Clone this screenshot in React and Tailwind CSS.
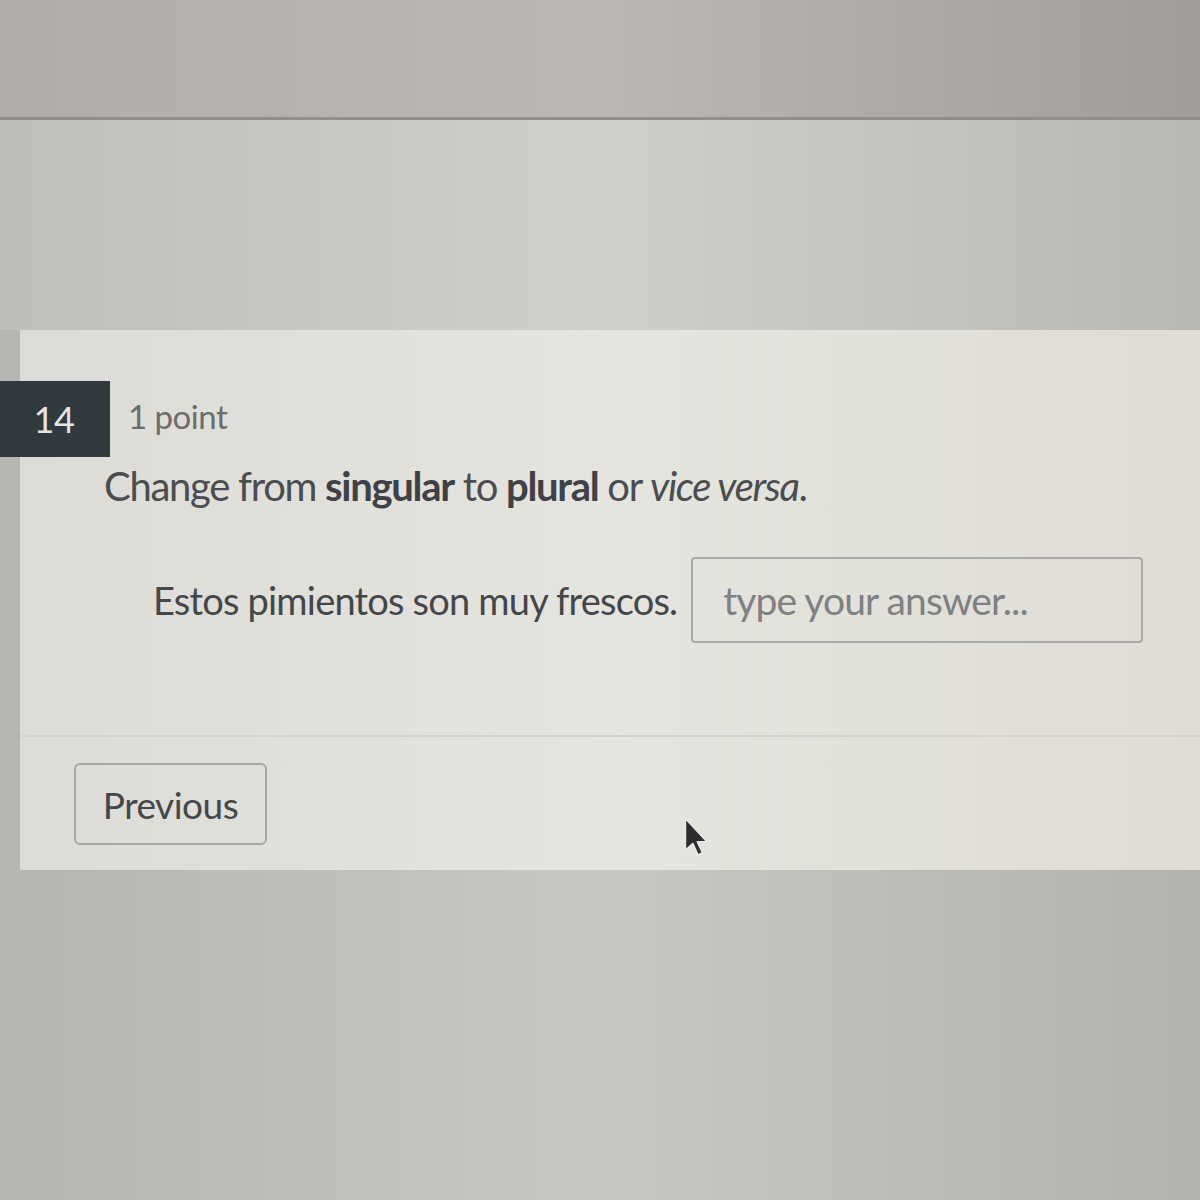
export default function App() {
  return (
    <div className="relative w-[1200px] h-[1200px] overflow-hidden flex flex-col font-['Lato','Noto_Sans',sans-serif] bg-linear-to-r from-[#b6b5b0] via-[#c8c7c2] to-[#b3b2ad]">
      <div className="h-[117px] bg-linear-to-r from-[#b0adaa] via-[#bab7b5] to-[#a09d9a]" />
      <div className="h-[3px] bg-[#8e8e8c]" />
      <div className="h-[210px] bg-linear-to-r from-[#bfbebb] via-[#cfcfcb] to-[#b9b8b4]" />
      <div className="pl-[20px]">
        <div className="h-[540px] flex flex-col bg-linear-to-r from-[#dcdbd5] via-[#e5e4de] to-[#dedcd5] pt-[51px]">
          <div className="flex items-center -ml-[20px]">
            <div className="w-[110px] h-[76px] bg-[#2f393e] flex items-center justify-center text-[36px] tracking-[-0.5px] text-[#e4e4e0] leading-none pr-[2px]">
              14
            </div>
            <div className="ml-[18px] text-[33px] tracking-[-0.5px] text-[#6b6c6c] leading-none pb-[6px]">1 point</div>
          </div>
          <div className="pl-[84px] mt-[6px] text-[40px] tracking-[-1.3px] leading-[46px] text-[#4a4d50]">
            Change from <span className="font-bold text-[#3e4145]">singular</span> to{" "}
            <span className="font-bold text-[#3e4145]">plural</span> or <span className="italic">vice versa</span>.
          </div>
          <div className="flex items-center pl-[133px] mt-[48px]">
            <div className="text-[38px] tracking-[-0.8px] text-[#44474a] leading-none">Estos pimientos son muy frescos.</div>
            <div className="ml-[14px] w-[452px] h-[86px] border-2 border-[#a9a9a7] rounded-[4px] flex items-center pl-[30px] text-[39px] tracking-[-0.9px] text-[#7e8082] leading-none">
              type your answer...
            </div>
          </div>
          <div className="mt-[92px] h-[2px] bg-[#d3d2cd]" />
          <div className="pl-[54px] mt-[26px]">
            <div className="w-[193px] h-[82px] border-2 border-[#a7a7a4] rounded-[6px] flex items-center justify-center text-[37px] tracking-[-0.5px] text-[#44474a] leading-none">
              Previous
            </div>
          </div>
        </div>
      </div>
      <svg className="absolute left-[683px] top-[816px]" width="30" height="46" viewBox="0 0 26 40">
        <path d="M2 2 L2 30 L8.5 24 L13 34 L17 32 L12.5 22.5 L21 22.5 Z" fill="#2a2c2e" stroke="#e8e8e4" strokeWidth="1.5" strokeLinejoin="round" />
      </svg>
    </div>
  );
}
